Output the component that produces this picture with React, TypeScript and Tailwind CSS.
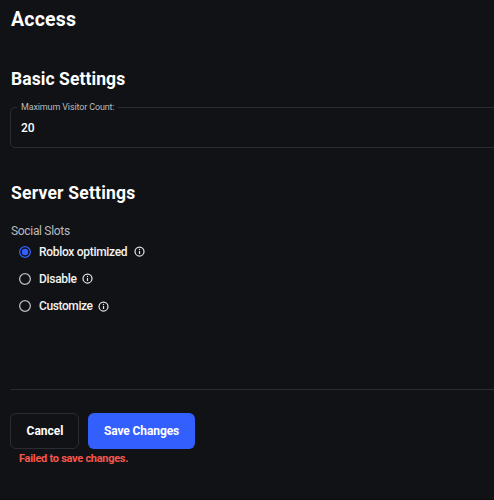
import React from "react";

function InfoIcon() {
  return (
    <svg width="11" height="11" viewBox="0 0 11 11" fill="none" className="shrink-0">
      <circle cx="5.5" cy="5.5" r="4.5" stroke="#e4e4e6" strokeWidth="1.25" />
      <path d="M5.5 4.9v3.1" stroke="#e4e4e6" strokeWidth="1.2" />
      <circle cx="5.5" cy="3.4" r="0.7" fill="#e4e4e6" />
    </svg>
  );
}

function Radio({ checked = false }: { checked?: boolean }) {
  return (
    <svg width="12" height="12" viewBox="0 0 12 12" fill="none" className="shrink-0">
      <circle cx="6" cy="6" r="5.35" stroke={checked ? "#335fff" : "#b9babc"} strokeWidth="1.3" />
      {checked && <circle cx="6" cy="6" r="3.2" fill="#335fff" />}
    </svg>
  );
}

function Option({ label, checked, textClass }: { label: string; checked?: boolean; textClass: string }) {
  return (
    <label className="flex h-[27.4px] items-center pl-2">
      <Radio checked={checked} />
      <span className={`ml-[8px] whitespace-nowrap text-[12px] leading-4 font-medium text-[#f2f2f3] ${textClass}`}>{label}</span>
      <InfoIcon />
    </label>
  );
}

export default function App() {
  return (
    <main className="flex h-[500px] w-[494px] flex-col overflow-hidden border-b border-[#0b0b0e] bg-[#111216] pl-[11px] font-['Roboto','Noto_Sans',sans-serif] text-white">
      <h1 className="mt-[7px] h-[26px] text-[19.5px] leading-[26px] font-bold tracking-[0.2px]">Access</h1>
      <h2 className="mt-[34px] h-6 text-[17.5px] leading-6 font-bold tracking-[0.08px]">Basic Settings</h2>
      <fieldset className="mt-[10px] -mr-3 -ml-px h-[47px] rounded-[5px] border border-[#2c2d31] pl-[6px]">
        <legend className="h-3 px-1 text-[9px] leading-3 tracking-[-0.14px] text-[#b9babc]">Maximum Visitor Count:</legend>
        <div className="mt-[7px] pl-1 text-[12px] leading-4 font-medium">20</div>
      </fieldset>
      <h2 className="mt-[33px] h-6 text-[17.5px] leading-6 font-bold tracking-[0.22px]">Server Settings</h2>
      <p className="mt-[18px] h-4 text-[12px] leading-4 tracking-[-0.32px] text-[#b9babc]">Social Slots</p>
      <div className="-mt-px flex h-[82px] flex-col">
        <Option label="Roblox optimized" checked textClass="w-[95px] tracking-[-0.3px]" />
        <Option label="Disable" textClass="w-[43px] tracking-[-0.3px]" />
        <Option label="Customize" textClass="w-[59px] tracking-[-0.4px]" />
      </div>
      <hr className="mt-[69px] border-[#2c2d31]" />
      <div className="-ml-px mt-[23px] flex gap-[9px]">
        <button className="h-9 w-[69px] rounded-[6px] border border-[#2c2d31] pl-px text-[12px] font-bold">Cancel</button>
        <button className="h-9 w-[107px] rounded-[6px] bg-[#335fff] text-[12px] font-bold tracking-[-0.1px]">Save Changes</button>
      </div>
      <p className="mt-px pl-[8px] text-[11px] leading-[17px] font-bold tracking-[-0.28px] text-[#f4564c]">Failed to save changes.</p>
    </main>
  );
}
